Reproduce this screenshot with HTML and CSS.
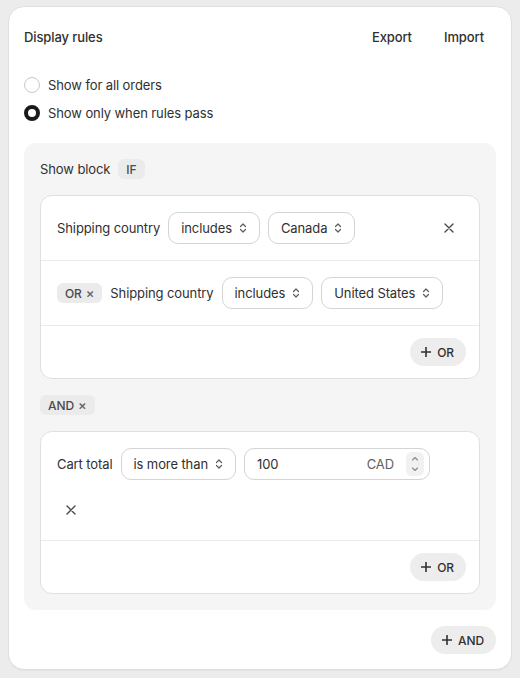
FILE: index.html
```html
<!DOCTYPE html>
<html lang="en">
<head>
<meta charset="utf-8">
<title>Display rules</title>
<link rel="stylesheet" href="styles.css">
</head>
<body>
<div class="card">
  <div class="header">
    <h2 class="title">Display rules</h2>
    <div class="actions">
      <button class="plain">Export</button>
      <button class="plain">Import</button>
    </div>
  </div>

  <div class="radios">
    <label class="radio"><span class="dot"></span>Show for all orders</label>
    <label class="radio"><span class="dot on"></span>Show only when rules pass</label>
  </div>

  <div class="block">
    <div class="block-head">
      <span>Show block</span>
      <span class="badge">IF</span>
    </div>

    <div class="group">
      <div class="rule">
        <span class="label">Shipping country</span>
        <span class="select">includes<svg class="chev" viewBox="0 0 8 12"><path d="M1.5 4.5L4 2l2.5 2.5M1.5 7.5L4 10l2.5-2.5"/></svg></span>
        <span class="select">Canada<svg class="chev" viewBox="0 0 8 12"><path d="M1.5 4.5L4 2l2.5 2.5M1.5 7.5L4 10l2.5-2.5"/></svg></span>
        <button class="x end"><svg viewBox="0 0 10 10"><path d="M1 1l8 8M9 1L1 9"/></svg></button>
      </div>
      <div class="rule">
        <span class="badge">OR<span class="bx">×</span></span>
        <span class="label">Shipping country</span>
        <span class="select">includes<svg class="chev" viewBox="0 0 8 12"><path d="M1.5 4.5L4 2l2.5 2.5M1.5 7.5L4 10l2.5-2.5"/></svg></span>
        <span class="select">United States<svg class="chev" viewBox="0 0 8 12"><path d="M1.5 4.5L4 2l2.5 2.5M1.5 7.5L4 10l2.5-2.5"/></svg></span>
      </div>
      <div class="foot">
        <button class="pill"><svg viewBox="0 0 10 10"><path d="M5 0.5v9M0.5 5h9"/></svg>OR</button>
      </div>
    </div>

    <div class="join"><span class="badge">AND<span class="bx">×</span></span></div>

    <div class="group">
      <div class="rule wrap">
        <span class="label">Cart total</span>
        <span class="select">is more than<svg class="chev" viewBox="0 0 8 12"><path d="M1.5 4.5L4 2l2.5 2.5M1.5 7.5L4 10l2.5-2.5"/></svg></span>
        <span class="number">
          <span class="val">100</span>
          <span class="unit">CAD</span>
          <span class="stepper"><svg viewBox="0 0 8 20"><path d="M1.5 6L4 3.5 6.5 6M1.5 14L4 16.5 6.5 14"/></svg></span>
        </span>
        <button class="x"><svg viewBox="0 0 10 10"><path d="M1 1l8 8M9 1L1 9"/></svg></button>
      </div>
      <div class="foot">
        <button class="pill"><svg viewBox="0 0 10 10"><path d="M5 0.5v9M0.5 5h9"/></svg>OR</button>
      </div>
    </div>
  </div>

  <div class="bottom">
    <button class="pill"><svg viewBox="0 0 10 10"><path d="M5 0.5v9M0.5 5h9"/></svg>AND</button>
  </div>
</div>
</body>
</html>
```

FILE: styles.css
```css
* { box-sizing: border-box; }

html, body {
  margin: 0;
  padding: 0;
  background: #ececec;
}

body {
  font-family: Inter, "Noto Sans", "Liberation Sans", sans-serif;
  font-size: 13px;
  letter-spacing: -0.1px;
  color: #303030;
  padding: 6px 8px 8px;
}

button {
  font: inherit;
  letter-spacing: inherit;
  color: inherit;
  border: 0;
  background: none;
  padding: 0;
  cursor: pointer;
}

.card {
  width: 504px;
  height: 664px;
  background: #fff;
  border: 1px solid #e0e0e0;
  border-radius: 16px;
  padding: 16px 15px 15px;
  box-shadow: 0 1px 0 rgba(0,0,0,0.04);
}

.header {
  display: flex;
  align-items: center;
  justify-content: space-between;
  height: 28px;
}

.title {
  margin: 0;
  font-size: 13px;
  font-weight: 550;
}

.actions {
  display: flex;
  gap: 8px;
}

.plain {
  height: 28px;
  padding: 0 12px;
  font-weight: 450;
  border-radius: 8px;
}

.radios {
  margin-top: 20px;
  display: flex;
  flex-direction: column;
}

.radio {
  display: flex;
  align-items: center;
  gap: 8px;
  height: 28px;
}

.dot {
  width: 16px;
  height: 16px;
  border-radius: 50%;
  border: 1px solid #c9c9c9;
  background: #fff;
}

.dot.on {
  border: 4.5px solid #1a1a1a;
}

.block {
  margin-top: 16px;
  background: #f5f5f5;
  border-radius: 12px;
  padding: 16px;
}

.block-head {
  display: flex;
  align-items: center;
  gap: 8px;
  height: 20px;
  margin-bottom: 16px;
}

.badge {
  display: inline-flex;
  align-items: center;
  gap: 4px;
  height: 20px;
  padding: 0 8px;
  border-radius: 6px;
  background: #ebebeb;
  color: #4a4a4a;
  font-size: 12px;
  font-weight: 500;
}

.bx {
  font-size: 13px;
  color: #616161;
  line-height: 1;
}

.group {
  background: #fff;
  border: 1px solid #e0e0e0;
  border-radius: 12px;
}

.rule {
  display: flex;
  align-items: center;
  gap: 8px;
  padding: 16px;
  border-bottom: 1px solid #ebebeb;
}

.rule.wrap {
  flex-wrap: wrap;
  row-gap: 16px;
}

.label {
  white-space: nowrap;
}

.select {
  display: inline-flex;
  align-items: center;
  gap: 7px;
  height: 32px;
  padding: 0 12px 0 12px;
  border: 1px solid #d4d4d4;
  border-radius: 10px;
  white-space: nowrap;
  background: #fff;
}

.chev {
  width: 8px;
  height: 12px;
  fill: none;
  stroke: #5c5c5c;
  stroke-width: 1.2;
  stroke-linecap: round;
  stroke-linejoin: round;
}

.x {
  width: 28px;
  height: 28px;
  display: inline-flex;
  align-items: center;
  justify-content: center;
  border-radius: 8px;
}

.x svg {
  width: 10px;
  height: 10px;
  fill: none;
  stroke: #4a4a4a;
  stroke-width: 1.4;
  stroke-linecap: round;
}

.x.end {
  margin-left: auto;
}

.number {
  display: inline-flex;
  align-items: center;
  width: 186px;
  height: 32px;
  padding: 0 5px 0 12px;
  border: 1px solid #d4d4d4;
  border-radius: 10px;
}

.val {
  flex: 1;
}

.unit {
  color: #616161;
  margin-right: 12px;
}

.stepper {
  width: 18px;
  height: 24px;
  border-radius: 6px;
  background: #f1f1f1;
  display: inline-flex;
  align-items: center;
  justify-content: center;
}

.stepper svg {
  width: 8px;
  height: 20px;
  fill: none;
  stroke: #8a8a8a;
  stroke-width: 1.1;
  stroke-linecap: round;
  stroke-linejoin: round;
}

.foot {
  display: flex;
  justify-content: flex-end;
  padding: 12px 13px 12px 16px;
}

.pill {
  display: inline-flex;
  align-items: center;
  gap: 6px;
  height: 28px;
  padding: 0 12px 0 11px;
  border-radius: 14px;
  background: #ededed;
  font-size: 12px;
  font-weight: 550;
}

.pill svg {
  width: 10px;
  height: 10px;
  fill: none;
  stroke: #303030;
  stroke-width: 1.6;
  stroke-linecap: round;
}

.join {
  display: flex;
  height: 20px;
  margin: 16px 0;
}

.bottom {
  display: flex;
  justify-content: flex-end;
  margin-top: 16px;
}
```
